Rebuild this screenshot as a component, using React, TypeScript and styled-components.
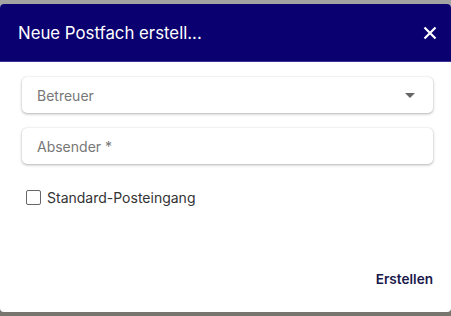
import React from 'react';
import styled, { createGlobalStyle } from 'styled-components';

const GlobalStyle = createGlobalStyle`
  html, body {
    margin: 0;
    padding: 0;
  }
  body {
    font-family: Inter, "Noto Sans", sans-serif;
    background: #a3a3a3;
  }
`;

const Backdrop = styled.div`
  width: 451px;
  height: 316px;
  padding: 4px 0;
  box-sizing: border-box;
  background: linear-gradient(#a3a3a3 50%, #78756e 50%);
`;

const Dialog = styled.div`
  height: 308px;
  background: #fff;
  border-radius: 4px;
  overflow: hidden;
  display: flex;
  flex-direction: column;
`;

const Header = styled.div`
  height: 58px;
  flex-shrink: 0;
  background: #0a0070;
  border-bottom: 1px solid #3a3590;
  box-sizing: border-box;
  display: flex;
  align-items: center;
  justify-content: space-between;
  padding: 0 11px 0 18px;
`;

const Title = styled.h2`
  margin: 0;
  color: #fff;
  font-size: 16.8px;
  font-weight: 400;
`;

const CloseButton = styled.button`
  border: 0;
  background: none;
  padding: 0;
  width: 20px;
  height: 20px;
  display: flex;
  align-items: center;
  justify-content: center;
  cursor: pointer;
`;

const Body = styled.div`
  flex: 1;
  padding: 15px 18px 0 22px;
  display: flex;
  flex-direction: column;
  gap: 15px;
`;

const Field = styled.div`
  height: 36px;
  width: 411px;
  box-sizing: border-box;
  border-radius: 5px;
  background: #fff;
  box-shadow: 0 1px 3px rgba(0, 0, 0, 0.3), 0 0 1px rgba(0, 0, 0, 0.12);
  display: flex;
  align-items: center;
  justify-content: space-between;
  padding: 0 14px 0 15px;
  color: #777;
  font-size: 14px;
`;

const Caret = styled.span`
  width: 0;
  height: 0;
  border-left: 5px solid transparent;
  border-right: 5px solid transparent;
  border-top: 5px solid #666;
  margin-right: 4px;
`;

const CheckRow = styled.label`
  display: flex;
  align-items: center;
  gap: 6px;
  margin-top: 10px;
  padding-left: 4px;
  color: #333;
  font-size: 14px;
`;

const Box = styled.span`
  width: 13px;
  height: 13px;
  border: 1.5px solid #666;
  border-radius: 2px;
`;

const Footer = styled.div`
  display: flex;
  justify-content: flex-end;
  padding: 0 18px 25px 0;
`;

const ActionButton = styled.button`
  border: 0;
  background: none;
  padding: 0;
  font-family: inherit;
  font-size: 13.6px;
  font-weight: 600;
  color: #19184a;
  cursor: pointer;
`;

const App = () => {
  return (
    <>
      <GlobalStyle />
      <Backdrop>
        <Dialog>
          <Header>
            <Title>Neue Postfach erstell...</Title>
            <CloseButton aria-label="close">
              <svg width="14" height="14" viewBox="0 0 14 14">
                <path d="M1.5 1.5 L12.5 12.5 M12.5 1.5 L1.5 12.5" stroke="#fff" strokeWidth="2.2" />
              </svg>
            </CloseButton>
          </Header>
          <Body>
            <Field>
              Betreuer
              <Caret />
            </Field>
            <Field>Absender *</Field>
            <CheckRow>
              <Box />
              Standard-Posteingang
            </CheckRow>
          </Body>
          <Footer>
            <ActionButton>Erstellen</ActionButton>
          </Footer>
        </Dialog>
      </Backdrop>
    </>
  );
};

export default App;
